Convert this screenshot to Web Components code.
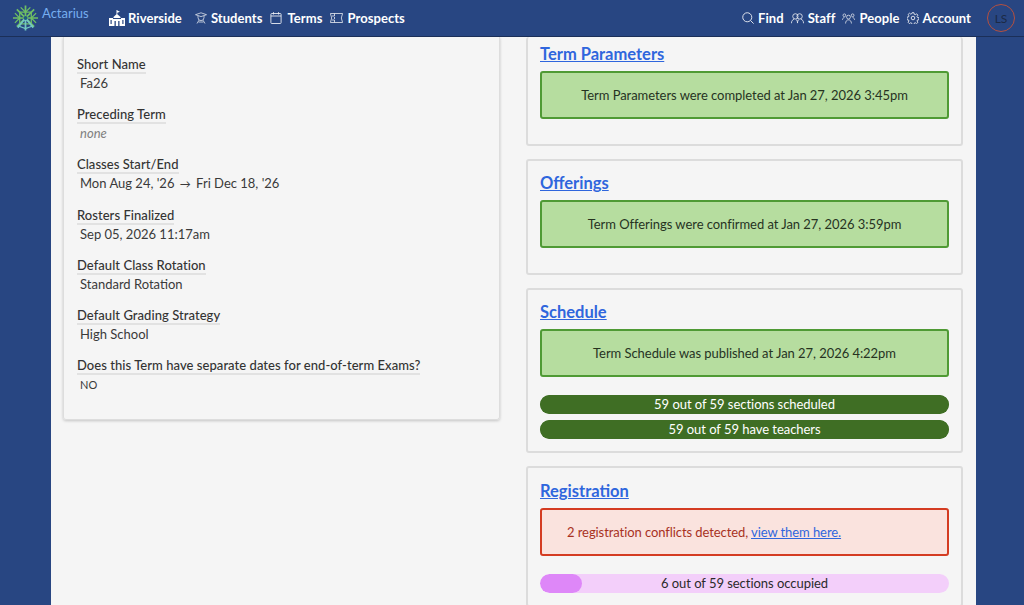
<!DOCTYPE html>
<html>
<head>
<meta charset="utf-8">
<title>Term</title>
<style>
    html, body { margin: 0; height: 100%; overflow: hidden; }
    body { background: #284682; font-family: "Lato", "Noto Sans", sans-serif; color: #2b2b2b; display: flex; flex-direction: column; }
    .arrow { font-size: 11px; margin: 0 2px; }
</style>
</head>
<body>

<app-nav>
    <nav-item slot="left" icon="school" style="margin-right: 5px">Riverside</nav-item>
    <nav-item slot="left" icon="student">Students</nav-item>
    <nav-item slot="left" icon="calendar">Terms</nav-item>
    <nav-item slot="left" icon="ticket">Prospects</nav-item>
    <nav-item slot="right" icon="search">Find</nav-item>
    <nav-item slot="right" icon="users">Staff</nav-item>
    <nav-item slot="right" icon="people">People</nav-item>
    <nav-item slot="right" icon="gear">Account</nav-item>
</app-nav>

<page-panel>
    <info-card slot="left">
        <field-item label="Short Name">Fa26</field-item>
        <field-item label="Preceding Term" muted>none</field-item>
        <field-item label="Classes Start/End">Mon Aug 24, '26 <span class="arrow">→</span> Fri Dec 18, '26</field-item>
        <field-item label="Rosters Finalized">Sep 05, 2026 11:17am</field-item>
        <field-item label="Default Class Rotation">Standard Rotation</field-item>
        <field-item label="Default Grading Strategy">High School</field-item>
        <field-item label="Does this Term have separate dates for end-of-term Exams?" small>NO</field-item>
    </info-card>

    <status-card slot="right" heading="Term Parameters" first>
        <status-alert>Term Parameters were completed at Jan 27, 2026 3:45pm</status-alert>
    </status-card>
    <status-card slot="right" heading="Offerings">
        <status-alert>Term Offerings were confirmed at Jan 27, 2026 3:59pm</status-alert>
    </status-card>
    <status-card slot="right" heading="Schedule" tight>
        <status-alert>Term Schedule was published at Jan 27, 2026 4:22pm</status-alert>
        <progress-pill value="59" max="59">59 out of 59 sections scheduled</progress-pill>
        <progress-pill value="59" max="59">59 out of 59 have teachers</progress-pill>
    </status-card>
    <status-card slot="right" heading="Registration" tight style="padding-top: 12px">
        <status-alert kind="error">2 registration conflicts detected, <a href="#">view them here.</a></status-alert>
        <progress-pill value="6" max="59" kind="purple">6 out of 59 sections occupied</progress-pill>
    </status-card>
</page-panel>

<script>
const ICONS = {
    school: `<svg viewBox="0 0 16 16" width="16" height="16" fill="#fff"><path d="M7.500 0h.8v.6L11 1.700 8.300 2.800v1.400L11.500 7v1h-7V7l3-2.800z"/><path d="M0 8h4v8H0zM12 8h4v8h-4zM4 9h8v7H4z"/><g fill="#284682"><rect x="1.500" y="10" width="1.200" height="4"/><rect x="13.300" y="10" width="1.200" height="4"/><rect x="5.500" y="11" width="1.300" height="5"/><rect x="9.200" y="11" width="1.300" height="5"/></g></svg>`,
    student: `<svg viewBox="0 0 12 12" width="12" height="12" fill="none" stroke="#fff" stroke-width=".8" opacity=".85"><path d="M.5 2.700 6 .8l5.500 1.900L6 4.600z"/><path d="M3 4v1.600a3 3 0 0 0 6 0V4"/><path d="M4 8.200 2 11.500M8 8.200l2 3.300M3.500 10h5"/></svg>`,
    calendar: `<svg viewBox="0 0 12 12" width="12" height="12" fill="none" stroke="#fff" stroke-width=".9" opacity=".9" style="margin-right: 1px"><rect x=".9" y="1.500" width="10.200" height="10" rx=".8"/><path d="M.9 4h10.200M3.500 .2v2.300M8.500 .2v2.300"/></svg>`,
    ticket: `<svg viewBox="0 0 13 10" width="13" height="10" fill="none" stroke="#fff" stroke-width=".8" opacity=".9"><path d="M.4.500h12.200l-1.300 4.500 1.300 4.500H.4L1.700 5z"/><path d="M4.500.500v2.500H2M4.500 9.500V7H2M4.500 4v2"/></svg>`,
    search: `<svg viewBox="0 0 13 13" width="12" height="12" fill="none" stroke="#fff" stroke-width="1" opacity=".9"><circle cx="5.700" cy="5.700" r="4.900"/><path d="m9.300 9.300 3.300 3.300"/></svg>`,
    users: `<svg viewBox="0 0 14 12" width="13" height="11" fill="none" stroke="#fff" stroke-width=".9" opacity=".9"><circle cx="4.700" cy="3.700" r="2.900"/><circle cx="9.300" cy="3.700" r="2.900"/><path d="M.4 11.200c0-2.700 1.300-4 3-4.400M13.600 11.200c0-2.700-1.300-4-3-4.400M5.200 7c1.200.5 1.800 2 1.800 4M8.800 7C7.600 7.500 7 9 7 11"/></svg>`,
    people: `<svg viewBox="0 0 14 12" width="13" height="11" fill="none" stroke="#fff" stroke-width=".8" opacity=".9"><circle cx="7" cy="4.500" r="2.100"/><circle cx="2.500" cy="2.500" r="1.500"/><circle cx="11.500" cy="2.500" r="1.500"/><path d="M3.800 11.500c0-2.500 1.300-4 3.200-4s3.200 1.500 3.200 4M.4 7.500c0-1.200.8-2.500 2.100-2.500M13.600 7.500c0-1.200-.8-2.500-2.100-2.500"/></svg>`,
    gear: `<svg viewBox="0 0 20 20" width="12" height="12" fill="none" stroke="#fff" stroke-width="1.500" opacity=".9"><circle cx="10" cy="10" r="3"/><path d="M8.400 1.200h3.200l.5 2.600 1.700.7 2.200-1.500 2.200 2.300-1.500 2.100.7 1.700 2.600.5v3.200l-2.600.5-.7 1.700 1.500 2.200-2.300 2.200-2.100-1.500-1.700.7-.5 2.600H8.400l-.5-2.600-1.700-.7-2.200 1.500-2.200-2.300 1.500-2.100-.7-1.700-2.600-.5V8.600l2.600-.5.7-1.700-1.500-2.200L4.100 2l2.100 1.500 1.700-.7z"/></svg>`,
};

class NavItem extends HTMLElement {
    connectedCallback() {
        this.attachShadow({ mode: 'open' });
        const gap = this.getAttribute('icon') === 'school' ? 3 : 4;
        this.shadowRoot.innerHTML = `
            <style>
                :host { display: inline-flex; align-items: center; gap: ${gap}px; color: #fff; font-size: 13px; font-weight: 700; letter-spacing: .06px; white-space: nowrap; }
                svg { display: block; flex: none; }
            </style>
            ${ICONS[this.getAttribute('icon')] || ''}<slot></slot>
        `;
    }
}

class AppNav extends HTMLElement {
    connectedCallback() {
        this.attachShadow({ mode: 'open' });
        this.shadowRoot.innerHTML = `
            <style>
                :host { display: flex; align-items: center; flex: none; height: 36px; border-bottom: 1px solid #1b2f58; background: #284682; padding: 0 9px 0 12px; }
                .brand { display: flex; align-items: center; gap: 3px; color: #76aef0; font-size: 13px; width: 97px; flex: none; }
                .brand span { padding-bottom: 11px; }
                .group { display: flex; align-items: center; gap: 8px; }
                .right { margin-left: auto; gap: 7px; }
                .avatar { width: 28px; height: 28px; box-sizing: border-box; border: 1px solid #b5503f; border-radius: 50%; display: flex; align-items: center; justify-content: center; color: #1c2a45; font-size: 12px; margin-left: 9px; }
            </style>
            <div class="brand">
                <svg viewBox="0 0 28 28" width="27" height="28" fill="none" stroke-width="1.800">
                    <g stroke="#6fc063"><path d="M5 5 23 23M23 5 5 23M1 14h26M14 1v12"/><path d="M8 8h12v12H8z" stroke-width="1.300"/><path d="M9 3l5 5 5-5M3 9l5 5-5 5M25 9l-5 5 5 5" stroke-width="1.300"/></g>
                    <g stroke="#74c7c0"><path d="M14 14v13M14 14 6 24M14 14l8 10"/><path d="M6 22l8 3 8-3" stroke-width="1.200"/></g>
                    <circle cx="14" cy="14" r="2" fill="#1f5a82"/>
                </svg>
                <span>Actarius</span>
            </div>
            <div class="group"><slot name="left"></slot></div>
            <div class="group right">
                <slot name="right"></slot>
                <div class="avatar">LS</div>
            </div>
        `;
    }
}

class PagePanel extends HTMLElement {
    connectedCallback() {
        this.attachShadow({ mode: 'open' });
        this.shadowRoot.innerHTML = `
            <style>
                :host { display: grid; grid-template-columns: 437px 437px; column-gap: 26px; align-items: start; flex: 1; box-sizing: border-box; width: 925px; margin-left: 51px; padding: 0 13px 0 12px; background: #f5f5f5; overflow: hidden; }
                .col { display: flex; flex-direction: column; gap: 13px; }
            </style>
            <div class="col"><slot name="left"></slot></div>
            <div class="col"><slot name="right"></slot></div>
        `;
    }
}

class InfoCard extends HTMLElement {
    connectedCallback() {
        this.attachShadow({ mode: 'open' });
        this.shadowRoot.innerHTML = `
            <style>
                :host { display: block; box-sizing: border-box; height: 383px; padding: 20px 13px 0; border: 1px solid #ddd; border-top: 0; border-radius: 0 0 3px 3px; box-shadow: 0 1px 3px rgba(0,0,0,.2); }
            </style>
            <slot></slot>
        `;
    }
}

class FieldItem extends HTMLElement {
    connectedCallback() {
        this.attachShadow({ mode: 'open' });
        this.shadowRoot.innerHTML = `
            <style>
                :host { display: block; height: 50.2px; font-size: 13px; }
                .label { display: block; width: fit-content; line-height: 15px; font-weight: 500; letter-spacing: .05px; color: #333; border-bottom: 2px solid #e2e2e2; }
                .value { display: block; margin-left: 3px; line-height: 19px; color: #3a3a3a; }
                .muted { color: #808080; font-style: italic; }
                .small { font-size: 11px; }
            </style>
            <span class="label">${this.getAttribute('label')}</span>
            <span class="value ${this.hasAttribute('muted') ? 'muted' : ''} ${this.hasAttribute('small') ? 'small' : ''}"><slot></slot></span>
        `;
    }
}

class StatusCard extends HTMLElement {
    connectedCallback() {
        this.attachShadow({ mode: 'open' });
        const first = this.hasAttribute('first');
        const pad = this.hasAttribute('tight') ? 12 : 25;
        this.shadowRoot.innerHTML = `
            <style>
                :host { display: block; box-sizing: border-box; padding: ${first ? 6 : 11}px 12px ${pad}px; border: 2px solid #dcdcdc; ${first ? 'border-top: 0;' : ''} border-radius: 3px; }
                a { display: inline-block; margin-bottom: 6px; font-size: 16.5px; line-height: 22px; font-weight: 700; color: #2f66dd; }
            </style>
            <a href="#">${this.getAttribute('heading')}</a>
            <slot></slot>
        `;
    }
}

class StatusAlert extends HTMLElement {
    connectedCallback() {
        this.attachShadow({ mode: 'open' });
        const error = this.getAttribute('kind') === 'error';
        this.shadowRoot.innerHTML = `
            <style>
                :host { display: block; box-sizing: border-box; height: 48px; line-height: 44px; padding: 0 ${error ? 25 : 12}px; text-align: ${error ? 'left' : 'center'}; font-size: 13px; letter-spacing: ${error ? '-.08px' : '-.05px'}; border: 2px solid ${error ? '#d43c22' : '#4f9a34'}; border-radius: 3px; background: ${error ? '#fae3de' : '#b6dd9f'}; color: ${error ? '#a8321f' : '#26331f'}; }
                ::slotted(a) { color: #2f66dd; }
            </style>
            <slot></slot>
        `;
    }
}

class ProgressPill extends HTMLElement {
    connectedCallback() {
        this.attachShadow({ mode: 'open' });
        const pct = 100 * this.getAttribute('value') / this.getAttribute('max');
        const purple = this.getAttribute('kind') === 'purple';
        this.shadowRoot.innerHTML = `
            <style>
                :host { display: block; position: relative; height: 19px; margin-top: 6px; border-radius: 10px; overflow: hidden; background: ${purple ? '#f3cffa' : '#3f6e24'}; font-size: 13px; letter-spacing: -.04px; }
                .fill { position: absolute; inset: 0 auto 0 0; width: ${pct}%; border-radius: 10px; background: ${purple ? '#de87f8' : '#3f6e24'}; }
                .text { position: relative; display: block; line-height: 19px; text-align: center; color: ${purple ? '#2b2b2b' : '#fff'}; }
            </style>
            <div class="fill"></div>
            <span class="text"><slot></slot></span>
        `;
    }
}

customElements.define('nav-item', NavItem);
customElements.define('app-nav', AppNav);
customElements.define('page-panel', PagePanel);
customElements.define('info-card', InfoCard);
customElements.define('field-item', FieldItem);
customElements.define('status-card', StatusCard);
customElements.define('status-alert', StatusAlert);
customElements.define('progress-pill', ProgressPill);

// pills sit a bit lower under an alert than under another pill
for(let alert of document.querySelectorAll('status-alert')) {
    if(alert.nextElementSibling) alert.style.marginBottom = '18px';
}
for(let pill of document.querySelectorAll('status-alert + progress-pill')) {
    pill.style.marginTop = '0';
}
</script>
</body>
</html>
